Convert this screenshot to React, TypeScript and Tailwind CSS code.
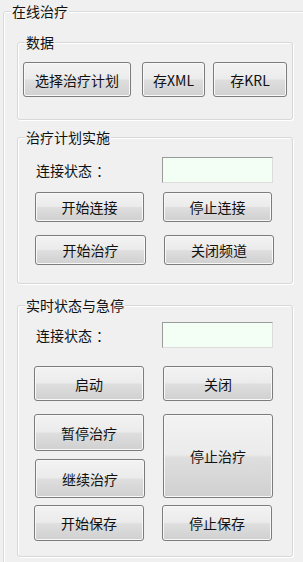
import React from "react";

const font = { fontFamily: '"Noto Sans CJK SC", "Noto Sans", sans-serif' };

function Btn({ label, className }: { label: string; className: string }) {
  return (
    <button
      className={
        "flex items-center justify-center rounded-[3px] border border-[#7c7c7c] bg-[linear-gradient(to_bottom,#f3f3f3_0%,#ebebeb_48%,#dedede_52%,#d0d0d0_100%)] shadow-[inset_0_0_0_1px_#f8f8f8] text-[14px] leading-none text-[#111] " +
        className
      }
    >
      {label}
    </button>
  );
}

function Group({
  title,
  className,
  children,
}: {
  title: string;
  className: string;
  children: React.ReactNode;
}) {
  return (
    <div
      className={
        "relative w-[276px] rounded-[3px] border border-[#d8d8d8] shadow-[inset_1px_1px_0_#ffffff,1px_1px_0_#ffffff] " +
        className
      }
    >
      <div className="absolute left-[7px] top-[-9px] bg-[#f0f0f0] px-[1px] text-[14px] leading-[17px] text-[#111]">
        {title}
      </div>
      {children}
    </div>
  );
}

function Field({ className }: { className: string }) {
  return (
    <div
      className={
        "h-[26px] w-[111px] border border-t-[#9a9a9a] border-l-[#9a9a9a] border-r-[#dcdcdc] border-b-[#dcdcdc] bg-[#f3fff4] " +
        className
      }
    />
  );
}

function Label() {
  return (
    <div className="ml-[18px] w-[126px] text-[14px] leading-none text-[#111]">
      连接状态<span className="ml-[4px]">：</span>
    </div>
  );
}

export default function App() {
  return (
    <div
      className="relative h-[562px] w-[303px] overflow-hidden bg-[#f0f0f0]"
      style={font}
    >
      <div className="pt-[11px] pl-[3px]">
        <div className="relative h-[580px] w-[330px] rounded-[3px] border border-[#dadada] shadow-[inset_1px_1px_0_#ffffff]">
          <div className="absolute left-[7px] top-[-9px] bg-[#f0f0f0] px-[1px] text-[14px] leading-[17px] text-[#111]">
            在线治疗
          </div>

          {/* 数据 */}
          <Group title="数据" className="ml-[13px] mt-[30px] h-[78px]">
            <div className="flex pl-[5px] pt-[19px]">
              <Btn label="选择治疗计划" className="h-[35px] w-[108px]" />
              <Btn label="存XML" className="ml-[11px] h-[35px] w-[63px]" />
              <Btn label="存KRL" className="ml-[8px] h-[35px] w-[74px]" />
            </div>
          </Group>

          {/* 治疗计划实施 */}
          <Group title="治疗计划实施" className="ml-[13px] mt-[17px] h-[147px]">
            <div className="flex items-center pt-[19px]">
              <Label />
              <Field className="" />
            </div>
            <div className="mt-[9px] flex pl-[17px]">
              <Btn label="开始连接" className="h-[30px] w-[109px]" />
              <Btn label="停止连接" className="ml-[19px] h-[30px] w-[109px]" />
            </div>
            <div className="mt-[13px] flex pl-[17px]">
              <Btn label="开始治疗" className="h-[30px] w-[111px]" />
              <Btn label="关闭频道" className="ml-[18px] h-[30px] w-[110px]" />
            </div>
          </Group>

          {/* 实时状态与急停 */}
          <Group title="实时状态与急停" className="ml-[13px] mt-[21px] h-[252px]">
            <div className="flex items-center pt-[16px]">
              <Label />
              <Field className="h-[25px]" />
            </div>
            <div className="mt-[18px] flex pl-[16px]">
              <Btn label="启动" className="h-[35px] w-[110px]" />
              <Btn label="关闭" className="ml-[19px] h-[35px] w-[110px]" />
            </div>
            <div className="mt-[13px] flex pl-[16px]">
              <div className="flex w-[111px] flex-col">
                <Btn label="暂停治疗" className="h-[37px] w-[110px]" />
                <Btn label="继续治疗" className="ml-[1px] mt-[8px] h-[39px] w-[110px]" />
              </div>
              <Btn label="停止治疗" className="ml-[18px] h-[84px] w-[110px]" />
            </div>
            <div className="mt-[7px] flex pl-[16px]">
              <Btn label="开始保存" className="h-[36px] w-[110px]" />
              <Btn label="停止保存" className="ml-[18px] h-[36px] w-[110px]" />
            </div>
          </Group>
        </div>
      </div>
    </div>
  );
}
